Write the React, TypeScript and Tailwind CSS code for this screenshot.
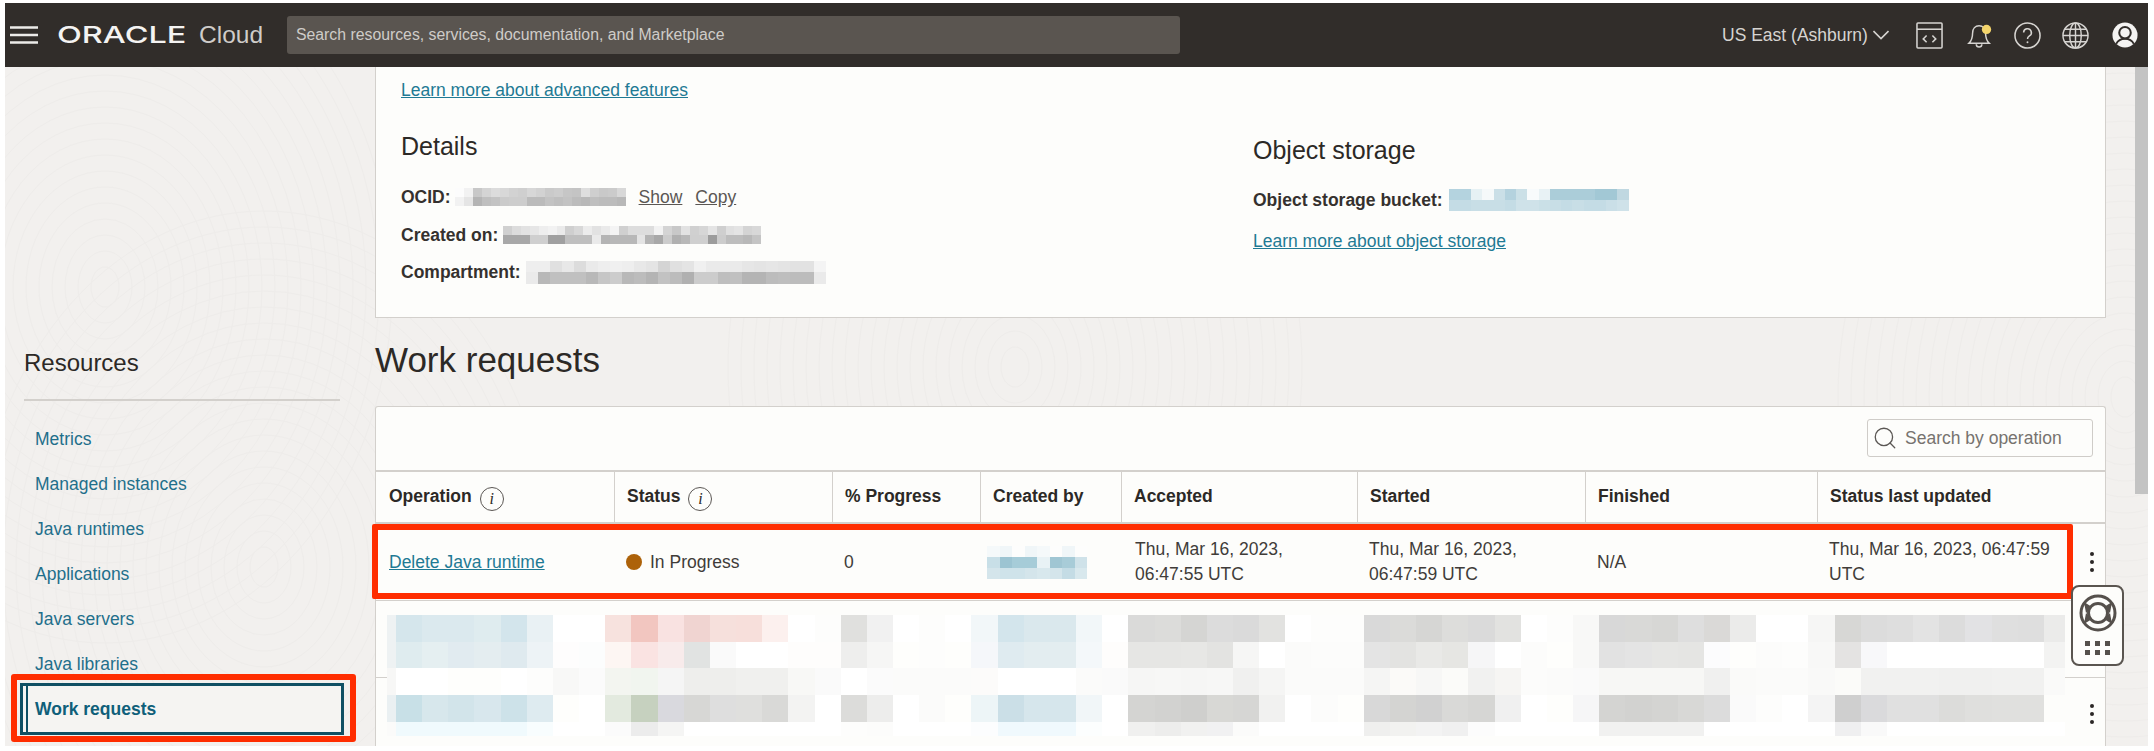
import { Search } from "lucide-react";

const MOSAIC = [
  "eef2f3 d5e6ec dbe9ee dbe9ee dfecef d3e5ec e9f1f4 ffffff ffffff f7e2de f2c6c0 f9e2e1 f0d4d1 f6e0dc f7dfdb fcf0ee ffffff fdfdfc e0e0de f1f1f1 ffffff fdfdfc ffffff f2f7f9 d3e5ec dae8ed dae8ed f2f7f9 ffffff dadad9 dcdcda d5d5d3 dcdcdc dadada e2e2e0 ffffff fdfdfc fdfdfc d9d9d9 dbdbd9 d6d6d4 dddddb dadada e2e2e0 ffffff fdfdfc f8f8f7 d8d8d8 d9d9d7 d7d7d5 dedede dad9d7 ebebea ffffff ffffff f6f6f5 d7d7d5 dcdcdc dedede e3e3e3 dcdcdc e2e2e4 dfdfdf dedede ebebea",
  "eef2f3 dfecef e5eff1 e1ebf0 e4edf0 dfeaef edf3f6 fefdfd fcfdfd fdf6f3 fae3e2 f8ebeb e1e3e2 fafafa ffffff ffffff fefdfc fefdfc eeeeed f6f6f5 fefefc fdfdfc fefefc f5f7fa dfebf0 e3edf0 e3edf0 f4f8fa fefdfc e6e6e4 e6e6e4 e7e7e5 e3e3e1 f6f6f5 ffffff fbfbfa fcfcfb fcfcfb e4e4e4 e3e3e1 e9e9e7 e6e6e3 f6f6f7 ffffff fcfcfb fefefc f8f8f7 e2e2e2 e4e4e4 e6e6e4 e5e5e3 fcfcfd fefefc fcfcfb fdfdfc f8f8f7 e4e3e2 f8f8fa ffffff ffffff ffffff ffffff ffffff ffffff f3f3f2",
  "f7f7f6 ffffff ffffff fefefc fefefc ffffff fdfdfc f8f8f7 fbfbfb f3f5f0 f1f5ef f5f5f5 eeeeec eeeeec f0f0ee f0f0ee f8f8f6 fafafa ffffff fbfbfb fbfbfa fbfbfa fbfbfa fcfbfa ffffff ffffff ffffff fbfbfa fafafa f6f6f5 f7f7f6 f6f6f5 f7f7f6 f0f0ef f5f5f4 fbfbfa fbfbfa fbfbfa f5f5f4 fbfaf8 f7f7f6 fbfbf9 f1f1f0 f6f5f3 fcfcfb fbfbfa fafafa f7f7f5 f7f7f5 f7f7f5 f7f7f5 f0f0ef fafaf9 fbfbfa fbfbfa f9f9f8 fbfbf9 f1f1f0 f1f1f0 f1f1f0 f0f0ef f0f0ef f1f1f0 f1f1f0 fafaf9",
  "eaf0f2 c8e0e7 d7e7ec d2e4ea d8e7ed cde2e9 deebf0 fefefc ffffff e3eadf c6d1bf d9d9de d7d7d5 dedede dfdfdd d9d9d7 f3f3f2 ffffff dcdcda ededec ffffff fbfbfa fefefc edf5f7 cbdfe7 d6e6ec d6e6ec f1f6f8 ffffff d4d4d2 d2d2d0 cfcfcd d8d8d5 d6d6d4 f1f1f0 ffffff fcfcfb fefefc d8d8d8 d4d4d2 d1d1d1 d9d9d7 d6d6d4 f0f0f0 ffffff fefefc f6f6f7 d4d4d2 d2d2d0 d4d4d2 d8d8d6 dcdcdc fafafa fdfdfc ffffff f4f4f4 cfcfcf dadadc e0e0e0 e0e0e0 dcdcda dfdfdd e0e0de e0e0de fdfdfb",
  "fbfbfa f0fafd f0fafd f0fafd f0fafd f0fafd f8fdfe ffffff ffffff fbfbfb ececec f5f5f4 ffffff ffffff ffffff ffffff ffffff ffffff fdfdfc fcfcfb ffffff ffffff ffffff fcfdfe f0f9fd f0f9fd f0f9fd fcfefe ffffff f0f0ef ededec f1f1f0 f1f1f2 fbfbfa ffffff ffffff ffffff ffffff efefee f2f2f0 f3f3f3 f0f0f0 fcfcfc ffffff ffffff ffffff ffffff f1f1f0 f1f1f0 f1f1f0 f1f1f0 ffffff ffffff ffffff ffffff ffffff efeff0 f9f9f9 ffffff ffffff ffffff ffffff ffffff ffffff ffffff",
].map((row) => row.split(" "));

const gray = (row: string) => row.split(" ").map((g) => `${g}${g}${g}`);

const OCID_BLUR = [
  gray("fc f2 c8 d4 dc d8 d2 cf d7 d2 ca cd c6 c4 de cf c9 cb d8"),
  gray("f2 e5 b4 bf c3 cb cd cd bb bb c3 bf c3 bc b8 bf bc bc b8"),
];
const CREATED_BLUR = [
  gray("d0 dc e2 e6 ee f2 ea cf d8 ec e2 ea f4 d0 dd dd dd f2 d4 c8 e2 d0 d6 e4 cf e0 e4 d4 d8"),
  gray("a8 a8 a8 cf cf a0 a0 bf bf bf ea b4 b8 b8 b8 e4 b4 a8 cc b0 b8 cf cf 9c cc bd bd b8 c4"),
];
const COMPARTMENT_BLUR = [
  gray("ee ee e0 e8 dc ea ee f0 ee e8 e4 d4 e0 e4 f0 ea ea ea e6 e4 e6 e4 e2 e2 f4"),
  gray("ea b8 c0 c0 c0 b8 c6 cc b8 bc b4 c2 bc b0 cc cc be c0 b4 b4 bc be bc bc ea"),
];
const BUCKET_BLUR = [
  "b4d3df b4d3df e6f1f4 f5f9fa cadfe7 b4d2de cbe0e7 f8fbfc e8f2f5 abcdd9 abcdd9 abcdd9 abcdd9 a2c8d5 a2c8d5 c0d8e1".split(" "),
  "c4dce5 c4dce5 c8dee6 c8dee6 c8dee6 c4dce5 cfe2e9 cfe2e9 cae0e7 c8dee6 c4dce5 c8dee6 c4dce5 c4dce5 cadfe7 cfe2e9".split(" "),
];
const CREATOR_BLUR = [
  "f5f9fa f0f6f8 fdfdfc f0f6f8 f5f9fa fdfdfc f0f6f8 fdfdfc".split(" "),
  "c8dfe7 9cc4d2 a6ccd8 a6ccd8 e8f2f5 a0c6d3 a8ccd8 cfe2e9".split(" "),
  "d4e5eb cfe3ea cfe3ea d4e5eb d8e8ed d4e5eb c4dce5 d8e8ed".split(" "),
];

const SWIRLS = [
  [259, 500],
  [100, 220],
  [1010, 300],
  [2120, 330],
];

const SIDE_LINKS = ["Metrics", "Managed instances", "Java runtimes", "Applications", "Java servers", "Java libraries"];

const COLUMNS = "grid grid-cols-[238px_218px_148px_141px_236px_228px_232px_1fr]";

const Blur = ({ rows, cell }: { rows: string[][]; cell: string }) => (
  <div className="flex flex-col shrink-0">
    {rows.map((row, i) => (
      <div key={i} className="flex">
        {row.map((c, j) => (
          <span key={j} className={cell} style={{ backgroundColor: `#${c}` }} />
        ))}
      </div>
    ))}
  </div>
);

const InfoIcon = () => (
  <span className="ml-2 mt-[3px] flex h-6 w-6 items-center justify-center rounded-full border border-[#5b5754] font-['Liberation_Serif',serif] text-[16px] font-normal italic">
    i
  </span>
);

const Dots = () => (
  <div className="flex flex-col gap-1">
    <span className="h-1 w-1 rounded-full bg-[#2b2826]" />
    <span className="h-1 w-1 rounded-full bg-[#2b2826]" />
    <span className="h-1 w-1 rounded-full bg-[#2b2826]" />
  </div>
);

const HeaderCell = ({ label, info, first }: { label: string; info?: boolean; first?: boolean }) => (
  <div className={`flex items-center font-bold ${first ? "pl-[13px]" : "border-l border-[#d3d0cc] pl-[12px]"}`}>
    <span className="-mt-[1px]">{label}</span>
    {info && <InfoIcon />}
  </div>
);

const App = () => {
  return (
    <div className="flex h-[751px] w-[2154px] flex-col overflow-hidden bg-white pb-[5px] pl-[5px] pr-[6px] pt-[3px] font-['Liberation_Sans',Arial,sans-serif] text-[17.5px] text-[#35312e]">
      {/* Top bar */}
      <header className="flex h-[64px] shrink-0 items-center bg-[#312d2a] text-[#d6d4d1]">
        <svg width="28" height="18" viewBox="0 0 28 18" className="ml-[5px]">
          <path d="M0 1.5h28M0 9h28M0 16.5h28" stroke="#ecebe9" strokeWidth="2.6" />
        </svg>
        <div className="ml-[19px] flex w-[134px] shrink-0 items-center">
          <span className="origin-left scale-x-[1.38] font-['Inter',sans-serif] text-[23.5px] font-medium leading-none text-[#f4f3f2]">ORACLE</span>
        </div>
        <span className="ml-[8px] w-[71px] shrink-0 text-[24.5px] leading-none text-[#cfccc9]">Cloud</span>
        <div className="ml-[17px] flex h-[38px] w-[893px] items-center rounded-[3px] bg-[#5a5550] pl-[9px] text-[15.800px] text-[#cfccc8]">
          Search resources, services, documentation, and Marketplace
        </div>
        <span className="ml-[542px] w-[146px] shrink-0 whitespace-nowrap">US East (Ashburn)</span>
        <svg width="16" height="10" viewBox="0 0 16 10" fill="none" stroke="#d6d4d1" strokeWidth="1.6" className="ml-[5px]">
          <path d="M0.500 1l7.500 7.500L15.500 1" />
        </svg>
        <svg width="27" height="27" viewBox="0 0 28 28" fill="none" stroke="#d6d4d1" strokeWidth="1.6" className="ml-[27px]">
          <rect x="1" y="1" width="26" height="26" rx="1" />
          <path d="M1 7.500h26" />
          <path d="M11 14l-3.500 3.500L11 21M17 14l3.500 3.500L17 21" />
        </svg>
        <svg width="26" height="28" viewBox="0 0 28 30" fill="none" stroke="#d6d4d1" strokeWidth="1.6" className="ml-[24px]">
          <path d="M2 24c3-3 4-5 4-11 0-5 3-8 7-8s7 3 7 8c0 6 1 8 4 11z" />
          <path d="M10 25a3 3 0 0 0 6 0" />
          <circle cx="21" cy="9" r="5" fill="#f3d46b" stroke="none" />
        </svg>
        <svg width="27" height="27" viewBox="0 0 28 28" fill="none" stroke="#d6d4d1" strokeWidth="1.6" className="ml-[21px]">
          <circle cx="14" cy="14" r="13" />
          <path d="M10 11a4 4 0 1 1 6 3.400c-1.400.9-2 1.600-2 3.100" />
          <circle cx="14" cy="21" r="1" fill="#d6d4d1" stroke="none" />
        </svg>
        <svg width="27" height="27" viewBox="0 0 28 28" fill="none" stroke="#d6d4d1" strokeWidth="1.5" className="ml-[21px]">
          <circle cx="14" cy="14" r="13" />
          <ellipse cx="14" cy="14" rx="6" ry="13" />
          <path d="M14 1v26M1 14h26M3 7.500h22M3 20.500h22" />
        </svg>
        <svg width="26" height="26" viewBox="0 0 28 28" className="ml-[23px]">
          <circle cx="14" cy="14" r="13.500" fill="#f4f3f2" />
          <circle cx="14" cy="11.500" r="6.200" fill="none" stroke="#312d2a" strokeWidth="2.200" />
          <path d="M4.500 23.500c2-4 5.500-5.500 9.500-5.500s7.500 1.500 9.500 5.500" fill="none" stroke="#312d2a" strokeWidth="2" />
        </svg>
      </header>

      <div className="relative flex min-h-0 flex-1 bg-[#f2f0ee]">
        {/* Background texture */}
        <svg className="absolute inset-0 h-full w-full" fill="none" stroke="#eeecea" strokeWidth="1">
          {SWIRLS.map(([cx, cy]) =>
            Array.from({ length: 22 }, (_, i) => (
              <ellipse key={`${cx}-${i}`} cx={cx} cy={cy} rx={14 + i * 13} ry={20 + i * 16} />
            )),
          )}
        </svg>

        {/* Sidebar */}
        <aside className="relative w-[370px] shrink-0 pl-[19px] pt-[281px]">
          <div className="w-[316px]">
            <h2 className="border-b-2 border-[#d3d0cc] pb-[21px] text-[24px] leading-[30px] text-[#2c2926]">Resources</h2>
            <ul className="mt-[16px]">
              {SIDE_LINKS.map((label) => (
                <li key={label} className="flex h-[45px] items-center pl-[11px] text-[#1f6f8b]">
                  {label}
                </li>
              ))}
              <li className="relative flex h-[45px] items-center pl-[11px] font-bold text-[#0f5f7a]">
                <span className="absolute -left-[4px] -top-[4px] h-[52px] w-[324px] border-[3px] border-[#0f4f63] bg-[#f5f4f2]">
                  <span className="absolute bottom-0 left-[3px] top-0 w-[2px] bg-[#0f4f63]" />
                </span>
                <span className="relative">Work requests</span>
                <span className="absolute -left-[13px] -top-[13px] h-[68px] w-[345px] rounded-[3px] border-[6px] border-[#ff2d00]" />
              </li>
            </ul>
          </div>
        </aside>

        {/* Main column */}
        <main className="relative flex w-[1731px] shrink-0 flex-col">
          <section className="h-[251px] shrink-0 border-x border-b border-[#d3d0cc] bg-[#fdfdfb] pl-[25px] pt-[10px]">
            <a className="leading-[24px] text-[#1f7a94] underline">Learn more about advanced features</a>
            <div className="mt-[28px] flex">
              <div className="w-[852px] shrink-0">
                <h3 className="text-[25px] leading-[30px] text-[#2c2926]">Details</h3>
                <div className="mt-[24px] flex h-[24px] items-center leading-[24px]">
                  <b>OCID:</b>
                  <div className="ml-[4px] mr-[13px]">
                    <Blur rows={OCID_BLUR} cell="h-[9px] w-[9px]" />
                  </div>
                  <a className="text-[#5b5754] underline">Show</a>
                  <a className="ml-[13px] text-[#5b5754] underline">Copy</a>
                </div>
                <div className="mt-[14px] flex h-[24px] items-center leading-[24px]">
                  <b>Created on:</b>
                  <div className="ml-[5px]">
                    <Blur rows={CREATED_BLUR} cell="h-[9px] w-[8.900px]" />
                  </div>
                </div>
                <div className="mt-[13px] flex h-[24px] items-center leading-[24px]">
                  <b>Compartment:</b>
                  <div className="ml-[5px]">
                    <Blur rows={COMPARTMENT_BLUR} cell="h-[11.500px] w-[12px]" />
                  </div>
                </div>
              </div>
              <div className="pt-[4px]">
                <h3 className="text-[25px] leading-[30px] text-[#2c2926]">Object storage</h3>
                <div className="mt-[23px] flex h-[24px] items-center leading-[24px]">
                  <b>Object storage bucket:</b>
                  <div className="ml-[6px]">
                    <Blur rows={BUCKET_BLUR} cell="h-[11px] w-[11.250px]" />
                  </div>
                </div>
                <a className="mt-[17px] block leading-[24px] text-[#1f7a94] underline">Learn more about object storage</a>
              </div>
            </div>
          </section>

          <h1 className="mt-[21px] text-[35px] leading-[42px] text-[#2c2926]">Work requests</h1>

          {/* Work requests table */}
          <section className="mt-[25px] flex min-h-0 flex-1 flex-col rounded-t-[3px] border-x border-t border-[#d3d0cc] bg-[#fdfdfb]">
            <div className="flex h-[63px] shrink-0 items-start justify-end pr-[12px] pt-[12px]">
              <div className="flex h-[38px] w-[226px] items-center rounded-[3px] border border-[#cfccc8] pl-[4px] text-[#77736f]">
                <Search className="h-[26px] w-[26px] text-[#5b5754]" strokeWidth={1.2} />
                <span className="ml-[7px]">Search by operation</span>
              </div>
            </div>
            <div className={`${COLUMNS} h-[54px] shrink-0 border-y-2 border-[#d3d0cc] text-[#2c2926]`}>
              <HeaderCell label="Operation" info first />
              <HeaderCell label="Status" info />
              <HeaderCell label="% Progress" />
              <HeaderCell label="Created by" />
              <HeaderCell label="Accepted" />
              <HeaderCell label="Started" />
              <HeaderCell label="Finished" />
              <HeaderCell label="Status last updated" />
            </div>

            <div className={`${COLUMNS} relative h-[77px] shrink-0 items-center border-b border-[#d3d0cc] leading-[25px] text-[#403c39]`}>
              <div className="pl-[13px]">
                <a className="text-[#1f7a94] underline">Delete Java runtime</a>
              </div>
              <div className="flex items-center pl-[12px]">
                <span className="h-4 w-4 rounded-full bg-[#ad6209]" />
                <span className="ml-2">In Progress</span>
              </div>
              <div className="pl-[12px]">0</div>
              <div className="pl-[7px]">
                <Blur rows={CREATOR_BLUR} cell="h-[11px] w-[12.500px]" />
              </div>
              <div className="pl-[14px]">
                Thu, Mar 16, 2023,
                <br />
                06:47:55 UTC
              </div>
              <div className="pl-[12px]">
                Thu, Mar 16, 2023,
                <br />
                06:47:59 UTC
              </div>
              <div className="pl-[12px]">N/A</div>
              <div className="flex items-center justify-between pl-[12px] pr-[11px]">
                <span className="whitespace-nowrap">
                  Thu, Mar 16, 2023, 06:47:59
                  <br />
                  UTC
                </span>
                <Dots />
              </div>
              <span className="absolute -left-[4px] top-0 h-[75px] w-[1701px] rounded-[2px] border-[6px] border-[#ff2d00]" />
            </div>

            <div className="flex flex-1">
              <div className="h-[77px] w-[11px] shrink-0 border-b border-[#d3d0cc]" />
              <div className="pt-[14px]">
                <div className="grid grid-cols-[9px_repeat(63,26.170px)_21px] grid-rows-[27px_26px_27px_27px_14px]">
                  {MOSAIC.flat().map((c, i) => (
                    <span key={i} style={{ backgroundColor: `#${c}` }} />
                  ))}
                </div>
              </div>
              <div className="flex flex-1 flex-col items-end">
                <div className="h-[77px] w-full border-b border-[#d3d0cc]" />
                <div className="mr-[11px] mt-[26px]">
                  <Dots />
                </div>
              </div>
            </div>
          </section>

          {/* Help widget */}
          <div className="absolute left-[1696px] top-[518px] flex h-[81px] w-[53px] flex-col items-center rounded-lg border-[2.500px] border-[#5a5550] bg-[#fdfdfb] pt-[7px]">
            <svg width="38" height="38" viewBox="0 0 38 38" fill="none" stroke="#55504c">
              <circle cx="19" cy="19" r="17" strokeWidth="3" />
              <circle cx="19" cy="19" r="9.500" strokeWidth="3" />
              <path d="M5 8l8 5-1 1-5 5zM33 8l-8 5 1 1 5 5zM5 30l8-5-1-1-5-5zM33 30l-8-5 1-1 5-5z" fill="#55504c" stroke="none" />
            </svg>
            <div className="mt-[9px] grid grid-cols-3 gap-x-[5px] gap-y-[4px]">
              {Array.from({ length: 6 }, (_, i) => (
                <span key={i} className="h-[5px] w-[5px] bg-[#55504c]" />
              ))}
            </div>
          </div>
        </main>

        {/* Scrollbar */}
        <div className="relative ml-[29px] h-[427px] w-[13px] bg-[#c3c3c3]" />
      </div>
    </div>
  );
};

export default App;
